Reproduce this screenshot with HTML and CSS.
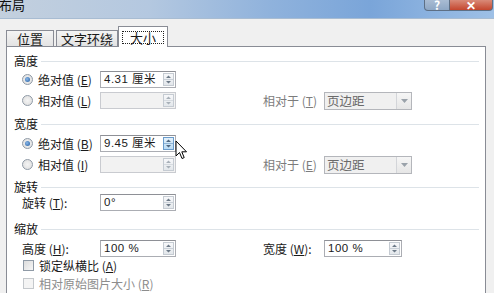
FILE: index.html
```html
<!DOCTYPE html>
<html lang="zh-CN">
<head>
    <meta charset="UTF-8">
    <meta name="viewport" content="width=device-width, initial-scale=1.0">
    <title>布局</title>
    <link rel="stylesheet" href="styles.css">
</head>
<body>
    <div class="titlebar">
        <span class="title">布局</span>
        <div class="caption-btns">
            <span class="btn-help">?</span>
            <span class="btn-close">✕</span>
        </div>
    </div>

    <div class="tabs">
        <div class="tab tab-pos">位置</div>
        <div class="tab tab-wrap">文字环绕</div>
        <div class="tab active"><span class="focus">大小</span></div>
    </div>

    <div class="panel">
        <div class="group-head">高度</div>
        <div class="row r1">
            <label class="opt"><span class="radio on"></span>绝对值 (<u>E</u>)</label>
            <div class="spin"><span class="val">4.31 厘米</span><span class="arrows"><svg width="11" height="13" viewBox="0 0 11 13"><path d="M3 5 L5.5 2.5 L8 5 Z M3 8 L5.5 10.5 L8 8 Z" fill="#6d7a88"/><line x1="1" y1="6.5" x2="10" y2="6.5" stroke="#c9d0d8"/></svg></span></div>
        </div>
        <div class="row r2">
            <label class="opt"><span class="radio"></span>相对值 (<u>L</u>)</label>
            <div class="spin off"><span class="val"></span><span class="arrows"><svg width="11" height="13" viewBox="0 0 11 13"><path d="M3 5 L5.5 2.5 L8 5 Z M3 8 L5.5 10.5 L8 8 Z" fill="#a8b0b8"/><line x1="1" y1="6.5" x2="10" y2="6.5" stroke="#d6dbe0"/></svg></span></div>
            <span class="rel">相对于 (<u>T</u>)</span>
            <div class="combo"><span class="val">页边距</span><span class="drop"><svg width="7" height="4" viewBox="0 0 7 4"><path d="M0 0 L7 0 L3.5 4 Z" fill="#9aa2aa"/></svg></span></div>
        </div>

        <div class="group-head g2">宽度</div>
        <div class="row r3">
            <label class="opt"><span class="radio on"></span>绝对值 (<u>B</u>)</label>
            <div class="spin"><span class="val">9.45 厘米</span><span class="arrows hover"><svg width="11" height="13" viewBox="0 0 11 13"><path d="M3 5 L5.5 2.5 L8 5 Z M3 8 L5.5 10.5 L8 8 Z" fill="#4f6780"/><line x1="1" y1="6.5" x2="10" y2="6.5" stroke="#8fb4d6"/></svg></span></div>
        </div>
        <div class="row r4">
            <label class="opt"><span class="radio"></span>相对值 (<u>I</u>)</label>
            <div class="spin off"><span class="val"></span><span class="arrows"><svg width="11" height="13" viewBox="0 0 11 13"><path d="M3 5 L5.5 2.5 L8 5 Z M3 8 L5.5 10.5 L8 8 Z" fill="#a8b0b8"/><line x1="1" y1="6.5" x2="10" y2="6.5" stroke="#d6dbe0"/></svg></span></div>
            <span class="rel">相对于 (<u>E</u>)</span>
            <div class="combo"><span class="val">页边距</span><span class="drop"><svg width="7" height="4" viewBox="0 0 7 4"><path d="M0 0 L7 0 L3.5 4 Z" fill="#9aa2aa"/></svg></span></div>
        </div>

        <div class="group-head g3">旋转</div>
        <div class="row r5">
            <label class="opt plain">旋转 (<u>T</u>):</label>
            <div class="spin"><span class="val">0°</span><span class="arrows"><svg width="11" height="13" viewBox="0 0 11 13"><path d="M3 5 L5.5 2.5 L8 5 Z M3 8 L5.5 10.5 L8 8 Z" fill="#6d7a88"/><line x1="1" y1="6.5" x2="10" y2="6.5" stroke="#c9d0d8"/></svg></span></div>
        </div>

        <div class="group-head g4">缩放</div>
        <div class="row r6">
            <label class="opt plain">高度 (<u>H</u>):</label>
            <div class="spin"><span class="val">100 %</span><span class="arrows"><svg width="11" height="13" viewBox="0 0 11 13"><path d="M3 5 L5.5 2.5 L8 5 Z M3 8 L5.5 10.5 L8 8 Z" fill="#6d7a88"/><line x1="1" y1="6.5" x2="10" y2="6.5" stroke="#c9d0d8"/></svg></span></div>
            <span class="rel dark">宽度 (<u>W</u>):</span>
            <div class="spin narrow"><span class="val">100 %</span><span class="arrows"><svg width="11" height="13" viewBox="0 0 11 13"><path d="M3 5 L5.5 2.5 L8 5 Z M3 8 L5.5 10.5 L8 8 Z" fill="#6d7a88"/><line x1="1" y1="6.5" x2="10" y2="6.5" stroke="#c9d0d8"/></svg></span></div>
        </div>
        <div class="row check c1">
            <span class="box"></span>锁定纵横比 (<u>A</u>)
        </div>
        <div class="row check c2 disabled">
            <span class="box"></span>相对原始图片大小 (<u>R</u>)
        </div>
    </div>

    <svg class="cursor" width="13" height="20" viewBox="0 0 13 20">
        <path d="M1 1 L1 16 L4.5 12.5 L7 18.5 L9.2 17.6 L6.8 11.8 L11.5 11.8 Z" fill="#fff" stroke="#000" stroke-width="1" stroke-linejoin="round"/>
    </svg>
</body>
</html>
```

FILE: styles.css
```css
body {
    margin: 0;
    width: 494px;
    height: 293px;
    overflow: hidden;
    background-color: #f0f0f0;
    font-family: "Noto Sans CJK SC", "Liberation Sans", sans-serif;
    font-size: 12px;
    color: #1a1a1a;
    position: relative;
}
.titlebar {
    height: 18px;
    display: flex;
    justify-content: space-between;
    background: linear-gradient(90deg, #c3d0de 0%, #b4c8e0 30%, #8fb2dc 55%, #7aa5d9 75%, #9ec0e6 100%);
    border-bottom: 1px solid #a8bcd2;
    overflow: hidden;
}
.title {
    font-size: 13px;
    line-height: 13px;
    margin-top: -2px;
    margin-left: -1px;
    color: #111;
}
.caption-btns {
    display: flex;
    margin-right: 1px;
    height: 10px;
}
.btn-help,
.btn-close {
    height: 10px;
    display: flex;
    justify-content: center;
    align-items: flex-end;
    color: #fff;
    font-size: 12px;
    line-height: 10px;
    overflow: hidden;
    border: 1px solid #5d6f85;
    border-top: none;
}
.btn-help {
    width: 24px;
    background: linear-gradient(#a9bcd3, #8ea7c4);
    border-radius: 0 0 0 4px;
    font-weight: bold;
}
.btn-close {
    width: 42px;
    background: linear-gradient(#d98a78, #c4462e);
    border-left: none;
    border-radius: 0 0 4px 0;
    font-weight: bold;
}
.tabs {
    display: flex;
    align-items: flex-end;
    height: 27px;
    padding-left: 6px;
    position: relative;
    z-index: 2;
}
.tab {
    height: 15px;
    line-height: 15px;
    font-size: 13px;
    text-align: center;
    border: 1px solid #898c95;
    border-bottom: none;
    background: linear-gradient(#f4f4f4, #e3e3e3);
    color: #1a1a1a;
}
.tab-pos {
    width: 46px;
}
.tab-wrap {
    width: 60px;
    margin-left: 2px;
}
.tab.active {
    width: 48px;
    height: 20px;
    margin-bottom: -1px;
    margin-left: 0;
    background: #fff;
    display: flex;
    justify-content: center;
    align-items: center;
}
.focus {
    display: block;
    width: 40px;
    height: 11px;
    line-height: 11px;
    border: 1px dotted #222;
}
.panel {
    margin: 0 8px 0 6px;
    height: 241px;
    background: #fff;
    border: 1px solid #898c95;
    border-bottom: none;
    padding: 6px 6px 0 7px;
}
.group-head {
    display: flex;
    align-items: center;
    height: 16px;
    line-height: 16px;
    color: #111;
}
.group-head::after {
    content: "";
    flex: 1;
    height: 1px;
    margin-left: 3px;
    background: #dde3e8;
}
.g2 { margin-top: 5px; }
.g3 { margin-top: 4px; }
.g4 { margin-top: 10px; }
.row {
    display: flex;
    align-items: center;
    height: 21px;
    padding-left: 8px;
}
.r3 { margin-top: 1px; }
.r5 { height: 17px; margin-top: -1px; }
.r6 { height: 19px; margin-top: 2px; }
.opt {
    display: flex;
    align-items: center;
    width: 78px;
    flex-shrink: 0;
}
.radio {
    width: 9px;
    height: 9px;
    border: 1px solid #8f9aa6;
    border-radius: 50%;
    background: radial-gradient(circle, #f4f4f4 0%, #dcdcdc 100%);
    margin-right: 5px;
    position: relative;
}
.radio.on::after {
    content: "";
    position: absolute;
    left: 2px;
    top: 2px;
    width: 5px;
    height: 5px;
    border-radius: 50%;
    background: radial-gradient(circle at 40% 40%, #8bb8e8, #1e5aa0);
}
.spin {
    display: flex;
    align-items: center;
    width: 74px;
    height: 15px;
    border: 1px solid #abadb3;
    border-top-color: #8e9096;
    background: #fff;
    flex-shrink: 0;
}
.spin.narrow {
    width: 76px;
}
.spin.off {
    background: #f2f2f2;
    border-color: #c9cbd0;
}
.spin .val {
    flex: 1;
    padding-left: 3px;
    font-family: "Liberation Sans", "Noto Sans CJK SC", sans-serif;
    letter-spacing: 0.5px;
    font-size: 11.5px;
    line-height: 15px;
}
.arrows {
    display: flex;
    width: 11px;
    height: 13px;
    margin-right: 1px;
    border: 1px solid #c5cbd2;
    background: linear-gradient(#f7f8fa, #e3e7eb);
    box-sizing: border-box;
    overflow: hidden;
}
.arrows svg {
    margin: -1px;
}
.arrows.hover {
    border-color: #6a9ccc;
    background: linear-gradient(#e4f1fb, #b9dbf5);
}
.rel {
    width: 61px;
    margin-left: 87px;
    color: #7c7c7c;
    flex-shrink: 0;
}
.rel.dark {
    color: #1a1a1a;
}
.combo {
    display: flex;
    width: 86px;
    height: 16px;
    border: 1px solid #b4b6bb;
    background: #f0f0f0;
}
.combo .val {
    flex: 1;
    padding-left: 2px;
    line-height: 16px;
    color: #6a6a6a;
    font-size: 12.5px;
}
.drop {
    width: 14px;
    display: flex;
    justify-content: center;
    align-items: center;
    border-left: 1px solid #d3d5d9;
    background: linear-gradient(#f6f6f6, #e6e6e6);
}
.check {
    height: 17px;
    padding-left: 9px;
}
.c1 { margin-top: -1px; }
.c2 { margin-top: 1px; }
.box {
    width: 9px;
    height: 9px;
    border: 1px solid #8f9aa6;
    background: linear-gradient(135deg, #dcdcdc, #f6f6f6);
    margin-right: 5px;
}
.check.disabled {
    color: #8d8d8d;
}
.check.disabled .box {
    border-color: #c4c8cc;
    background: #f4f4f4;
}
.cursor {
    position: absolute;
    left: 175px;
    top: 140px;
}
```
